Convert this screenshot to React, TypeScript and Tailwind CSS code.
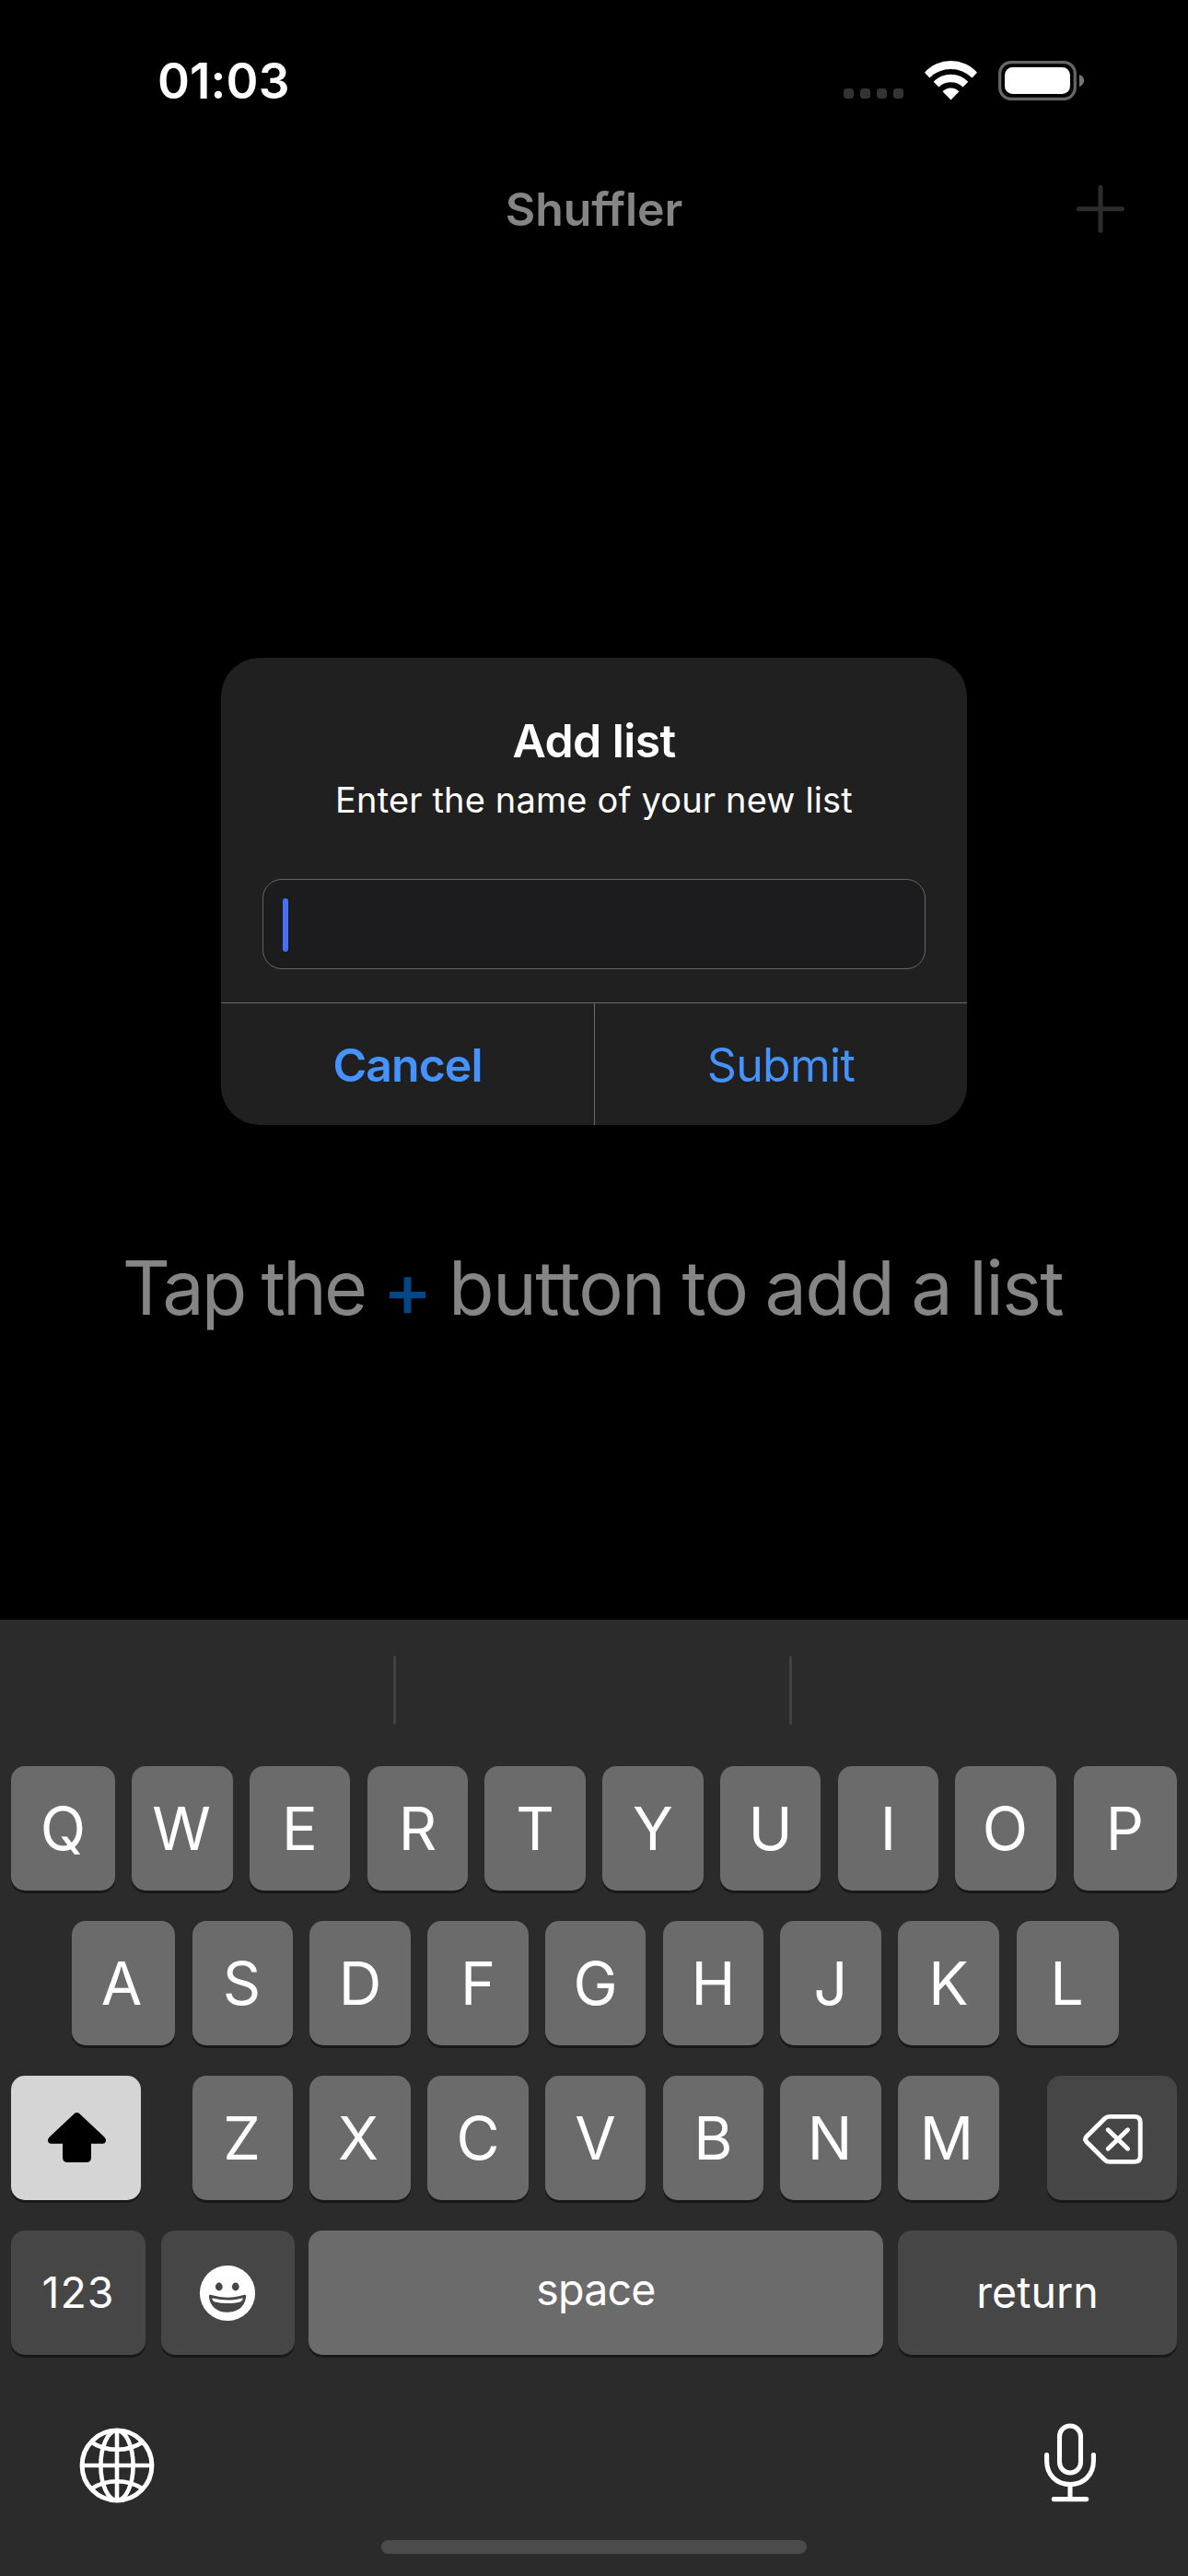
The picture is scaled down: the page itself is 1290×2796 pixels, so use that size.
import type { ReactNode } from 'react';

type KeyDef = { label: string; size: string };

const base =
  'flex h-[135px] shrink-0 items-center justify-center rounded-[15px] shadow-[0_3px_0_#191919]';
const light = 'bg-[#6b6b6b]';
const dark = 'bg-[#464646]';

function Key({ className, children }: { className: string; children: ReactNode }) {
  return <button className={`${base} ${className}`}>{children}</button>;
}

function LetterRow({ keys }: { keys: KeyDef[] }) {
  return (
    <>
      {keys.map((k) => (
        <Key key={k.label} className={`${light} ${k.size} pt-[2px] text-[64.6px] leading-none`}>
          {k.label}
        </Key>
      ))}
    </>
  );
}

const row1: KeyDef[] = [
  { label: 'Q', size: 'w-[113px]' },
  { label: 'W', size: 'ml-[18px] w-[110px] pr-[2px]' },
  { label: 'E', size: 'ml-[18px] w-[109px]' },
  { label: 'R', size: 'ml-[19px] w-[109px]' },
  { label: 'T', size: 'ml-[18px] w-[110px]' },
  { label: 'Y', size: 'ml-[18px] w-[110px]' },
  { label: 'U', size: 'ml-[18px] w-[109px]' },
  { label: 'I', size: 'ml-[19px] w-[109px]' },
  { label: 'O', size: 'ml-[18px] w-[110px] pr-[1px]' },
  { label: 'P', size: 'ml-[19px] w-[112px] pr-[1px]' },
];

const row2: KeyDef[] = [
  { label: 'A', size: 'w-[112px] pr-[4px]' },
  { label: 'S', size: 'ml-[19px] w-[109px] pr-[2px]' },
  { label: 'D', size: 'ml-[18px] w-[110px]' },
  { label: 'F', size: 'ml-[18px] w-[110px]' },
  { label: 'G', size: 'ml-[18px] w-[109px]' },
  { label: 'H', size: 'ml-[19px] w-[109px]' },
  { label: 'J', size: 'ml-[18px] w-[110px]' },
  { label: 'K', size: 'ml-[18px] w-[110px]' },
  { label: 'L', size: 'ml-[19px] w-[111px] pr-[2px]' },
];

const row3: KeyDef[] = [
  { label: 'Z', size: 'w-[109px] pr-[2px]' },
  { label: 'X', size: 'ml-[18px] w-[110px] pr-[4px]' },
  { label: 'C', size: 'ml-[18px] w-[110px]' },
  { label: 'V', size: 'ml-[18px] w-[109px]' },
  { label: 'B', size: 'ml-[19px] w-[109px]' },
  { label: 'N', size: 'ml-[18px] w-[110px] pr-[2px]' },
  { label: 'M', size: 'ml-[18px] w-[110px] pr-[4px]' },
];

function WifiIcon() {
  return (
    <svg className="ml-[22px] h-[44px] w-[59px]" viewBox="1003 64 59 44" fill="#fff">
      <path d="M1004 77.7A38.3 38.3 0 0 1 1061 77.7L1055.6 83.4A33 33 0 0 0 1009.4 83.4Z" />
      <path d="M1013.7 87.7A26 26 0 0 1 1051.3 87.7L1045.6 93.6A18.6 18.6 0 0 0 1019.4 93.6Z" />
      <path d="M1023.5 98.2A12.6 12.6 0 0 1 1041.5 98.2L1032.5 107.4Z" />
    </svg>
  );
}

function BatteryIcon() {
  return (
    <svg className="ml-[21px] h-[45px] w-[96px]" viewBox="1083 64 96 45">
      <rect x="1085.7" y="66.7" width="81.6" height="39.6" rx="12" fill="none" stroke="#666" strokeWidth="3.2" />
      <rect x="1091" y="72" width="71" height="29" rx="8.5" fill="#fff" />
      <path d="M1172 80C1175 81 1177.2 83.6 1177.2 86.6S1175 92.2 1172 93.2Z" fill="#757575" />
    </svg>
  );
}

function StatusBar() {
  return (
    <div className="flex h-[174px] items-center pl-[171px] pr-[111px]">
      <span className="pt-[3px] text-[53px] font-semibold leading-none tracking-[0.1px]">01:03</span>
      <div className="ml-auto flex items-center">
        <div className="mt-[28px] flex gap-[7px]">
          {[0, 1, 2, 3].map((i) => (
            <span key={i} className="size-[11px] rounded-[3.5px] bg-[#333]" />
          ))}
        </div>
        <WifiIcon />
        <BatteryIcon />
      </div>
    </div>
  );
}

function NavBar() {
  return (
    <div className="grid h-[104px] grid-cols-[1fr_auto_1fr] items-center">
      <span />
      <h1 className="pt-px text-[50px] font-semibold leading-none tracking-[-0.1px] text-[#858585]">Shuffler</h1>
      <svg
        className="mr-[67px] size-[56px] justify-self-end"
        viewBox="0 0 56 56"
        stroke="#2c2c2c"
        strokeWidth="5"
        strokeLinecap="round"
      >
        <path d="M28 5.3V52.3M4.5 28.8H51.5" />
      </svg>
    </div>
  );
}

function AddListDialog() {
  return (
    <div className="absolute left-[240px] top-[714px] flex h-[507px] w-[810px] flex-col overflow-hidden rounded-[42px] bg-[#202020]">
      <h2 className="mt-[60px] text-center text-[50px] font-semibold leading-[60px] tracking-[-0.6px]">Add list</h2>
      <p className="mt-[9px] text-center text-[38px] leading-[50px] tracking-[0.15px]">Enter the name of your new list</p>
      <div className="mx-[45px] mt-[61px] flex h-[98px] items-center rounded-[21px] border border-[#666668] bg-[#1c1c1e] pl-[21px] pt-[2px]">
        <span className="h-[58px] w-[6px] rounded-[3px] bg-[#476ff4]" />
      </div>
      <div className="mt-auto flex h-[133px] border-t border-[#6a6a6a] text-[50px] leading-none text-[#4593ff]">
        <button className="w-[405px] pt-[2px] font-semibold tracking-[-0.95px]">Cancel</button>
        <button className="flex-1 border-l border-[#6a6a6a] pt-[2px] tracking-[-0.7px]">Submit</button>
      </div>
    </div>
  );
}

function ShiftIcon() {
  return (
    <svg className="ml-[2px] h-[57px] w-[65px]" viewBox="0 0 65 57" fill="#000">
      <path d="M29.6 2.2Q32.5 0 35.4 2.2L62.3 27.6Q64.6 30 63.9 32.4Q63.1 34.8 60.3 34.8H48V49.5Q48 55 42.5 55H22.5Q17 55 17 49.5V34.8H4.7Q1.9 34.8 1.1 32.4Q0.4 30 2.7 27.6Z" />
    </svg>
  );
}

function DeleteIcon() {
  return (
    <svg
      className="ml-[2px] mt-[2px] h-[56px] w-[67px]"
      viewBox="0 0 67 56"
      fill="none"
      stroke="#fff"
      strokeWidth="4.9"
      strokeLinecap="round"
      strokeLinejoin="round"
    >
      <path d="M29.5 3.4H57Q63.2 3.4 63.2 9.6V46.2Q63.2 52.4 57 52.4H29.5Q26.8 52.4 24.8 50.5L5.1 31.1Q2 27.9 5.1 24.7L24.8 5.3Q26.8 3.4 29.5 3.4Z" />
      <path d="M28.2 17.8L49.5 38.2M49.5 17.8L28.2 38.2" />
    </svg>
  );
}

function EmojiIcon() {
  return (
    <svg className="mr-[2px] size-[62px]" viewBox="0 0 62 62">
      <circle cx="31" cy="31" r="30.1" fill="#fff" />
      <ellipse cx="21.8" cy="24" rx="3.9" ry="4.4" fill="#464646" />
      <ellipse cx="39.8" cy="24" rx="3.9" ry="4.4" fill="#464646" />
      <path d="M12.6 32.8Q31 38.5 49.4 32.8Q51.2 32.6 51.1 34.4C50.4 45 42 51.8 31 51.8S11.6 45 10.9 34.4Q10.8 32.6 12.6 32.8Z" fill="#464646" />
      <path d="M15.2 36.6Q31 40.6 46.8 36.6Q48.3 36.4 47.5 38Q46.6 39.9 44.8 40.5Q31 43.6 17.2 40.5Q15.4 39.9 14.5 38Q13.7 36.4 15.2 36.6Z" fill="#fff" />
    </svg>
  );
}

function GlobeIcon() {
  return (
    <svg className="size-[84px]" viewBox="-42 -42 84 84" fill="none" stroke="#fff" strokeWidth="4.6">
      <circle r="37.9" strokeWidth="5" />
      <ellipse rx="17.6" ry="37.9" />
      <path d="M0 -38V38M-38 0H38" />
      <path d="M-28 -25.5Q-16 -17.2 0 -17.2T28 -25.5M-28 25.5Q-16 17.2 0 17.2T28 25.5" />
    </svg>
  );
}

function MicIcon() {
  return (
    <svg className="h-[88px] w-[60px]" viewBox="0 0 60 88" fill="none" stroke="#fff" strokeWidth="5.1" strokeLinecap="round">
      <rect x="18.5" y="4" width="23" height="51" rx="11.5" />
      <path d="M4.6 35.5V42C4.6 57.5 15.5 67.6 30 67.6S55.4 57.5 55.4 42V35.5" />
      <path d="M30 68V83.6M12.3 83.6H47.7" />
    </svg>
  );
}

function Keyboard() {
  return (
    <div className="flex h-[1038px] shrink-0 flex-col bg-[#2b2b2b]">
      <div className="flex h-[159px] pl-[427px] pt-[39px]">
        <span className="h-[75px] w-[3px] rounded-full bg-[#414141]" />
        <span className="ml-[427px] h-[75px] w-[3px] rounded-full bg-[#414141]" />
      </div>
      <div className="flex flex-col gap-[33px]">
        <div className="flex px-3">
          <LetterRow keys={row1} />
        </div>
        <div className="flex pl-[78px]">
          <LetterRow keys={row2} />
        </div>
        <div className="flex px-3">
          <Key className="mr-[56px] w-[141px] bg-[#d5d5d5]">
            <ShiftIcon />
          </Key>
          <LetterRow keys={row3} />
          <Key className={`${dark} ml-[52px] w-[141px]`}>
            <DeleteIcon />
          </Key>
        </div>
        <div className="flex px-3 text-[46.5px] leading-none">
          <Key className={`${dark} w-[146px] tracking-[1px]`}>123</Key>
          <Key className={`${dark} ml-[17px] w-[145px]`}>
            <EmojiIcon />
          </Key>
          <Key className={`${light} ml-[15px] w-[624px] pb-[7px] tracking-[-0.8px]`}>space</Key>
          <Key className={`${dark} ml-[16px] w-[303px]`}>return</Key>
        </div>
      </div>
      <div className="mt-[73px] flex items-start justify-between pl-[85px] pr-[98px]">
        <div className="pt-[5px]">
          <GlobeIcon />
        </div>
        <MicIcon />
      </div>
      <div className="mb-6 mt-auto h-[15px] w-[462px] self-center rounded-full bg-[#4b4b4b]" />
    </div>
  );
}

export default function App() {
  return (
    <div className="relative flex h-[2796px] w-[1290px] flex-col overflow-hidden bg-black font-['Inter',sans-serif] text-white">
      <StatusBar />
      <NavBar />
      <main className="flex flex-1 flex-col items-center pt-[1070px]">
        <p className="whitespace-nowrap pr-[3px] text-[81px] leading-[100px] tracking-[-1.65px] [word-spacing:-2px] text-[#858585]">
          <span className="tracking-[-2.9px]">Tap the</span>{' '}
          <span className="relative top-[2px] font-[450] text-[#054687]">+</span> button to add a list
        </p>
      </main>
      <Keyboard />
      <AddListDialog />
    </div>
  );
}
